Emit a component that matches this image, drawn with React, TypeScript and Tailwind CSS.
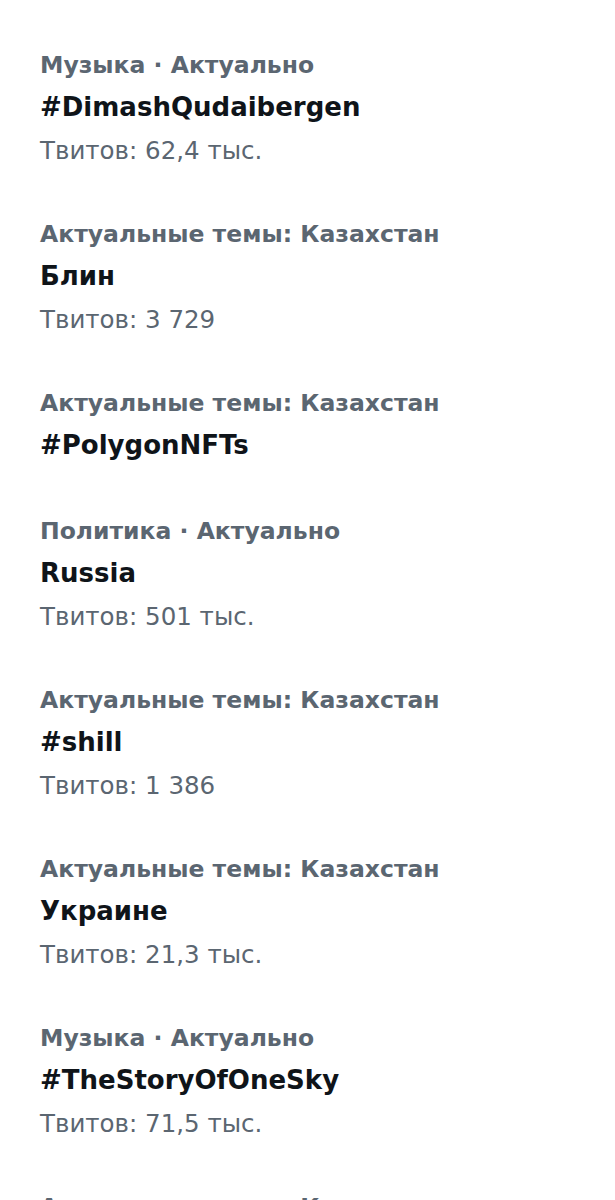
const trends: { category: string; title: string; count?: string }[] = [
  { category: 'Музыка · Актуально', title: '#DimashQudaibergen', count: 'Твитов: 62,4 тыс.' },
  { category: 'Актуальные темы: Казахстан', title: 'Блин', count: 'Твитов: 3 729' },
  { category: 'Актуальные темы: Казахстан', title: '#PolygonNFTs' },
  { category: 'Политика · Актуально', title: 'Russia', count: 'Твитов: 501 тыс.' },
  { category: 'Актуальные темы: Казахстан', title: '#shill', count: 'Твитов: 1 386' },
  { category: 'Актуальные темы: Казахстан', title: 'Украине', count: 'Твитов: 21,3 тыс.' },
  { category: 'Музыка · Актуально', title: '#TheStoryOfOneSky', count: 'Твитов: 71,5 тыс.' },
  { category: 'Актуальные темы: Казахстан', title: '' },
]

export default function App() {
  return (
    <div
      className="w-[615px] h-[1200px] overflow-hidden bg-white pt-[44px] pl-[40px]"
      style={{ fontFamily: '"DejaVu Sans", Inter, sans-serif' }}
    >
      {trends.map((t, i) => (
        <div key={i} className={t.count ? 'pb-[39px]' : 'pb-[44px]'}>
          <div className="text-[23.5px] leading-[42px] font-bold text-[#5b6671] whitespace-nowrap">
            {t.category}
          </div>
          <div className="text-[26px] leading-[42px] font-bold text-[#0f1419] whitespace-nowrap">
            {t.title}
          </div>
          {t.count && (
            <div className="text-[24.5px] leading-[46px] text-[#5b6671] whitespace-nowrap">
              {t.count}
            </div>
          )}
        </div>
      ))}
    </div>
  )
}
